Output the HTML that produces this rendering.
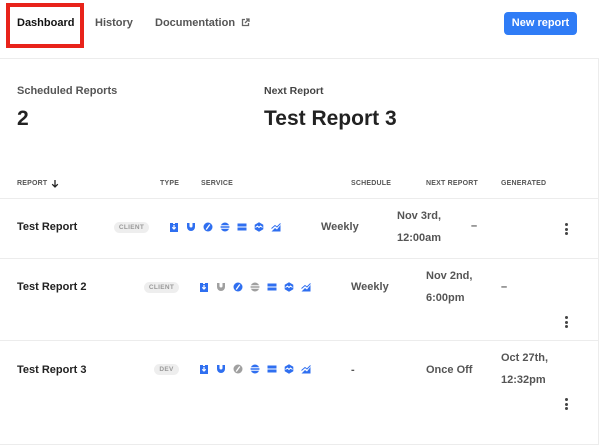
<!DOCTYPE html>
<html><head><meta charset="utf-8"><style>
*{margin:0;padding:0;box-sizing:border-box}
body{width:600px;height:448px;background:#fff;font-family:"Liberation Sans",Arial,sans-serif;position:relative;overflow:hidden;color:#222}
.a{position:absolute;white-space:nowrap}
.nav{font-size:11px;font-weight:bold;color:#555;top:17px}
.hd{font-size:7px;font-weight:bold;color:#555;top:180px;letter-spacing:.2px}
.line{position:absolute;left:0;width:598px;height:1px;background:#ececec}
.name{font-size:11px;font-weight:bold;color:#222}
.val{font-size:11px;font-weight:bold;color:#555}
.badge{position:absolute;height:11px;border-radius:6px;background:#eee;color:#999;font-size:6.5px;font-weight:bold;text-align:center;line-height:11px;letter-spacing:.3px}
.icons{position:absolute;display:flex;gap:7px}
.icons svg{width:10px;height:10px;display:block}
.dots{position:absolute;width:3px}
.dots i{display:block;width:3px;height:3px;border-radius:50%;background:#444;margin-bottom:1.5px}
</style></head><body>
<div class="a" style="left:6px;top:3px;width:78px;height:45px;border:4px solid #e8231a"></div>
<div class="a nav" style="left:17px;color:#111">Dashboard</div>
<div class="a nav" style="left:95px">History</div>
<div class="a nav" style="left:155px">Documentation</div>
<svg class="a" style="left:241px;top:18px" width="9" height="9" viewBox="0 0 9 9"><path d="M4 1.5H1.5v6h6V5M5 1h3v3M8 1L4 5" stroke="#666" stroke-width="1.3" fill="none"/></svg>
<div class="a" style="left:504px;top:12px;width:73px;height:23px;background:#2f7cf6;border-radius:4px;color:#fff;font-size:11px;font-weight:bold;text-align:center;line-height:23px">New report</div>
<div class="line" style="top:58px"></div>
<div class="a" style="left:17px;top:85px;font-size:11px;font-weight:bold;color:#555">Scheduled Reports</div>
<div class="a" style="left:17px;top:107px;font-size:21px;font-weight:bold;color:#222">2</div>
<div class="a" style="left:264px;top:85px;font-size:10.5px;font-weight:bold;color:#444">Next Report</div>
<div class="a" style="left:264px;top:107px;font-size:21px;font-weight:bold;color:#222">Test Report 3</div>
<div class="a hd" style="left:17px">REPORT</div>
<svg class="a" style="left:51px;top:179px" width="8" height="9" viewBox="0 0 8 9"><path d="M4 1v7M1.2 5.2L4 8l2.8-2.8" stroke="#222" stroke-width="1.3" fill="none"/></svg>
<div class="a hd" style="left:160px">TYPE</div>
<div class="a hd" style="left:201px">SERVICE</div>
<div class="a hd" style="left:351px">SCHEDULE</div>
<div class="a hd" style="left:426px">NEXT REPORT</div>
<div class="a hd" style="left:501px">GENERATED</div>
<div class="line" style="top:198px"></div>
<div class="line" style="top:258px"></div>
<div class="line" style="top:340px"></div>
<div class="line" style="top:444px"></div>
<div class="a" style="left:598px;top:58px;width:1px;height:387px;background:#ececec"></div>

<div class="a name" style="left:17px;top:221px">Test Report</div>
<div class="badge" style="left:114px;top:222px;width:35px">CLIENT</div>
<div class="icons" style="left:169px;top:222px" id="i1"></div>
<div class="a val" style="left:321px;top:221px">Weekly</div>
<div class="a val" style="left:397px;top:210px">Nov 3rd,</div>
<div class="a val" style="left:397px;top:232px">12:00am</div>
<div class="a val" style="left:471px;top:220px">–</div>
<div class="dots" style="left:565px;top:223px"><i></i><i></i><i></i></div>

<div class="a name" style="left:17px;top:281px">Test Report 2</div>
<div class="badge" style="left:144px;top:282px;width:35px">CLIENT</div>
<div class="icons" style="left:199px;top:282px" id="i2"></div>
<div class="a val" style="left:351px;top:281px">Weekly</div>
<div class="a val" style="left:426px;top:270px">Nov 2nd,</div>
<div class="a val" style="left:426px;top:292px">6:00pm</div>
<div class="a val" style="left:501px;top:281px">–</div>
<div class="dots" style="left:565px;top:316px"><i></i><i></i><i></i></div>

<div class="a name" style="left:17px;top:364px">Test Report 3</div>
<div class="badge" style="left:154px;top:364px;width:25px">DEV</div>
<div class="icons" style="left:199px;top:364px" id="i3"></div>
<div class="a val" style="left:351px;top:364px">-</div>
<div class="a val" style="left:426px;top:364px">Once Off</div>
<div class="a val" style="left:501px;top:352px">Oct 27th,</div>
<div class="a val" style="left:501px;top:374px">12:32pm</div>
<div class="dots" style="left:565px;top:398px"><i></i><i></i><i></i></div>

<script>
function ic(c){return [
'<svg viewBox="0 0 10 10"><path d="M1 1h3v1h2V1h3v9H1z" fill="'+c[0]+'"/><path d="M5 3v4M3.3 5.3L5 7l1.7-1.7" stroke="#fff" stroke-width="1.2" fill="none"/></svg>',
'<svg viewBox="0 0 10 10"><path d="M1 1h2.5v3a1.5 1.5 0 003 0V1H9v4a4 4 0 01-8 0z" fill="'+c[1]+'"/></svg>',
'<svg viewBox="0 0 10 10"><circle cx="5" cy="5" r="4.5" fill="'+c[2]+'"/><path d="M6.8 2.5L3.2 7.5" stroke="#fff" stroke-width="1.3"/></svg>',
'<svg viewBox="0 0 10 10"><circle cx="5" cy="5" r="4.5" fill="'+c[3]+'"/><path d="M0 3.8h10M0 6.2h10" stroke="#fff" stroke-width="1"/></svg>',
'<svg viewBox="0 0 10 10"><rect x="0.5" y="1.5" width="9" height="3" fill="'+c[4]+'"/><rect x="0.5" y="5.5" width="9" height="3" fill="'+c[4]+'"/></svg>',
'<svg viewBox="0 0 10 10"><path d="M5 0.3L9.3 2.7v4.6L5 9.7 0.7 7.3V2.7z" fill="'+c[5]+'"/><path d="M1.5 5.5l2-1.5 1.5 1.5 1.5-1.5 2 1.5" stroke="#fff" stroke-width="1" fill="none"/></svg>',
'<svg viewBox="0 0 10 10"><path d="M0.5 9.5L4 6l2 1.5L9.5 3v6.5z" fill="'+c[6]+'"/><path d="M0.5 6.5L4 3.5l2 1.5 3.5-3.5" stroke="'+c[6]+'" stroke-width="1" fill="none"/></svg>'
].join('')}
var B='#2f6ff0',G='#a0a0a0';
document.getElementById('i1').innerHTML=ic([B,B,B,B,B,B,B]);
document.getElementById('i2').innerHTML=ic([B,G,B,G,B,B,B]);
document.getElementById('i3').innerHTML=ic([B,B,G,B,B,B,B]);
</script>
</body></html>
